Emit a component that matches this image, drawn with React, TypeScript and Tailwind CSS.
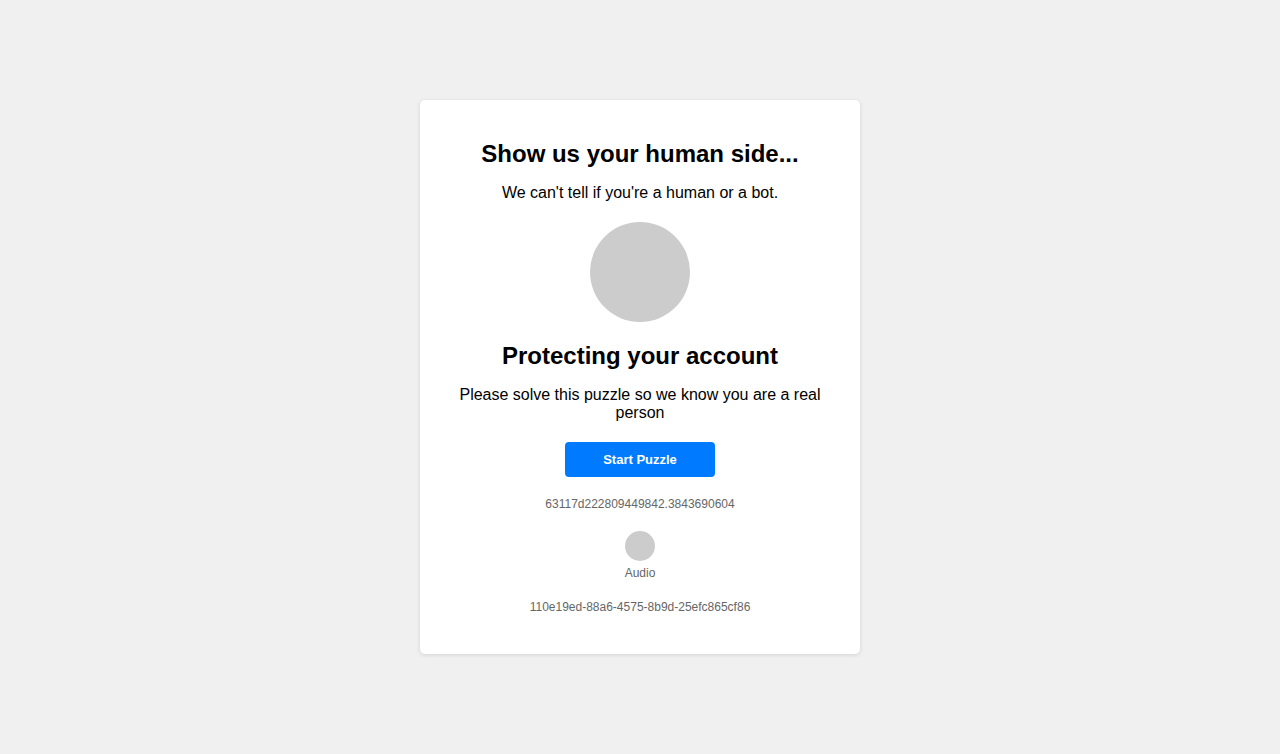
import React from "react";

const App: React.FC = () => {
  return (
    <div className="min-h-screen w-full flex items-center justify-center bg-[#f0f0f0] font-['Liberation_Sans',Arial,sans-serif]">
      <div className="w-[440px] bg-white rounded-[5px] shadow-[0_1px_4px_rgba(0,0,0,0.12)] py-10 px-[38px] flex flex-col items-center text-center">
        <h1 className="text-[24px] leading-[28px] font-bold text-black">
          Show us your human side...
        </h1>
        <p className="mt-4 text-[16px] leading-[18px] text-black">
          We can't tell if you're a human or a bot.
        </p>
        <div className="mt-5 w-[100px] h-[100px] rounded-full bg-[#cccccc]" />
        <h2 className="mt-5 text-[24px] leading-[28px] font-bold text-black">
          Protecting your account
        </h2>
        <p className="mt-4 w-full text-[16px] leading-[18px] text-black">
          Please solve this puzzle so we know you are a real person
        </p>
        <button className="mt-5 w-[150px] h-[35px] rounded-[4px] bg-[#007bff] text-white text-[13px] font-bold">
          Start Puzzle
        </button>
        <div className="mt-5 text-[12px] leading-[14px] text-[#666666]">
          63117d222809449842.3843690604
        </div>
        <div className="mt-5 flex flex-col items-center">
          <div className="w-[30px] h-[30px] rounded-full bg-[#cccccc]" />
          <span className="mt-[5px] text-[12px] leading-[14px] text-[#666666]">Audio</span>
        </div>
        <div className="mt-5 text-[12px] leading-[14px] text-[#666666]">
          110e19ed-88a6-4575-8b9d-25efc865cf86
        </div>
      </div>
    </div>
  );
};

export default App;
